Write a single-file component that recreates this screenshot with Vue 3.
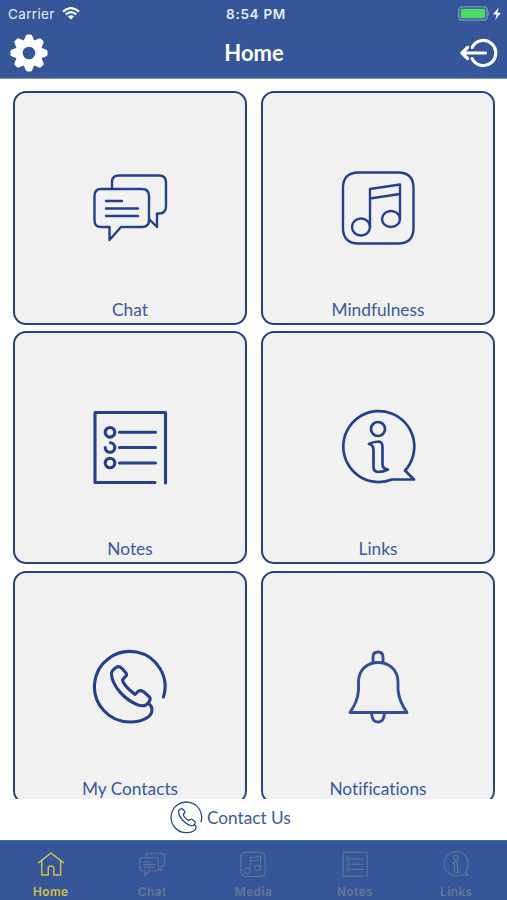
<template>
	<div class="screen">
		<header class="header">
			<div class="status-bar">
				<div class="status-left">
					<span class="carrier">Carrier</span>
					<svg class="wifi" viewBox="0 0 18 13">
						<path d="M1 4.6Q9-2.4 17 4.6M3.8 7.4Q9 3 14.2 7.4" />
						<path class="solid" d="M6 9.5Q9 7.2 12 9.5L9 12.5Z" />
					</svg>
				</div>
				<span class="time">8:54 PM</span>
				<div class="status-right">
					<svg class="battery" viewBox="0 0 44 16">
						<rect class="battery-case" x="0.7" y="0.9" width="28.4" height="13.2" rx="3.4" />
						<rect class="battery-level" x="2.6" y="2.8" width="24.6" height="9.4" rx="1.2" />
						<path class="battery-tip" d="M30.2 5.2Q32.4 7.5 30.2 10Z" />
						<path class="bolt" d="M40.8 1.2L35 8.5H38.6L37.2 14.2L42.8 6.8H39.2Z" />
					</svg>
				</div>
			</div>
			<div class="nav-bar">
				<svg class="gear" viewBox="-20 -20 40 40">
					<circle r="13.3" />
					<path v-for="n in 8" :key="n" class="tooth" d="M-5.6-11.5L-3.4-16.8Q-2.9-18.5-1.7-18.5H1.7Q2.9-18.5 3.4-16.8L5.6-11.5Z" :transform="`rotate(${n * 45})`" />
					<circle class="hole" r="6.3" />
				</svg>
				<h1>Home</h1>
				<svg class="logout" viewBox="0 0 40 30">
					<path d="M13.1 9.4A12.5 12.5 0 1 1 13.1 20.6M26.5 15H3M8.5 9.5L3 15L8.5 20.5" />
				</svg>
			</div>
		</header>

		<main class="grid">
			<div v-for="card in cards" :key="card.label" class="card">
				<svg class="card-icon" :class="card.icon" viewBox="12 9 76 76">
					<path v-for="d in icons[card.icon]" :key="d" :d="d" />
				</svg>
				<span class="card-label">{{ card.label }}</span>
			</div>
		</main>

		<div class="contact">
			<svg class="contact-icon" viewBox="12 9 76 76">
				<path v-for="d in icons.phone" :key="d" :d="d" />
			</svg>
			<span>Contact Us</span>
		</div>

		<nav class="tab-bar">
			<div
				v-for="tab in tabs"
				:key="tab.label"
				class="tab"
				:class="{ active: tab.label === activeTab }"
				@click="activeTab = tab.label"
			>
				<svg class="tab-icon" viewBox="12 9 76 76">
					<path v-for="d in icons[tab.icon]" :key="d" :d="d" />
				</svg>
				<span>{{ tab.label }}</span>
			</div>
		</nav>
	</div>
</template>

<script setup>
import { ref } from 'vue'

const activeTab = ref('Home')

const cards = [
	{ label: 'Chat', icon: 'chat' },
	{ label: 'Mindfulness', icon: 'music' },
	{ label: 'Notes', icon: 'notes' },
	{ label: 'Links', icon: 'info' },
	{ label: 'My Contacts', icon: 'phone' },
	{ label: 'Notifications', icon: 'bell' },
]

const tabs = [
	{ label: 'Home', icon: 'home' },
	{ label: 'Chat', icon: 'chat' },
	{ label: 'Media', icon: 'music' },
	{ label: 'Notes', icon: 'notes' },
	{ label: 'Links', icon: 'info' },
]

const icons = {
	home: ['M14 43L50 15L86 43', 'M23 37V79H42V59Q42 53 50 53T58 59V79H78V37'],
	chat: [
		'M21 29H62Q69 29 69 36V60Q69 67 62 67H41L29.5 80V67H21Q14.5 67 14.5 60V36Q14.5 29 21 29Z',
		'M32 28V22Q32 15.5 39 15.5H79Q86 15.5 86 22.5V46Q86 53.5 79 53.5H77V67L69 59',
		'M26 41H42M26 48.5H58M26 56H58',
	],
	music: [
		'M30.5 12.5H70Q85.5 12.5 85.5 28V68Q85.5 83.5 70 83.5H30.5Q15 83.5 15 68V28Q15 12.5 30.5 12.5Z',
		'M42 67V29L72 24.5V59M42 38.5L72 34',
		'M24 67A9 8.5 0 1 0 42 67A9 8.5 0 1 0 24 67Z',
		'M54 59A9 8 0 1 0 72 59A9 8 0 1 0 54 59Z',
	],
	notes: [
		'M75 82.5H15V12.5H85.5V83',
		'M25.2 32.3A4.8 4.8 0 1 0 34.8 32.3A4.8 4.8 0 1 0 25.2 32.3Z',
		'M30.5 42.7A4.8 4.8 0 1 1 25.2 47.5',
		'M25.2 63A4.8 4.8 0 1 0 34.8 63A4.8 4.8 0 1 0 25.2 63Z',
		'M39.5 32.3H75.5M39.5 47.5H75.5M39.5 63H75.5',
	],
	info: [
		'M86 79.5H64A35.5 35.5 0 1 1 77 70.5Z',
		'M43 29A7 7 0 1 0 57 29A7 7 0 1 0 43 29Z',
		'M41 44Q46 41.5 51 41.5Q54.5 42 54.5 47V64Q54.5 69 60 69.5Q55 72 50 72Q45.5 71.5 45.5 67V50Q45.5 45 41 44Z',
	],
	phone: [
		'M83.5 57A35.3 35.3 0 1 0 50 82C62 82 72 77 72 70Q72 66 69 64',
		'M31.5 34Q31 31 36 27.5Q39 25.5 42 28.5L46 33Q47.5 35 45 37L42.5 40Q43 45 55 54.5L58 51.5Q61 49.5 64 52L69.5 57Q71 59 69 62L66 65Q63 66.5 58 65C45 60 32 46 31.5 34Z',
	],
	bell: [
		'M22 72.5Q30 61 30.5 50V42C30.5 29 40 22.5 50 22.5S70 29 70 42V50Q71 61 79 72.5Z',
		'M45 22.5V17Q45 12 50 12T55 17V22.5',
		'M43.5 73Q44 82 50 82T56.5 73',
	],
}
</script>

<style>
body {
	background-color: #fff;
}
</style>

<style scoped>
.screen {
	display: flex;
	flex-direction: column;
	width: 507px;
	height: 900px;
	overflow: hidden;
	background-color: #fff;
	color: #3a599b;
	font-family: Lato, sans-serif;
	font-variant-ligatures: none;
}
svg {
	display: block;
	fill: none;
	stroke: currentColor;
	stroke-linecap: round;
	stroke-linejoin: round;
}
.header {
	flex: none;
	height: 79px;
	box-sizing: border-box;
	border-bottom: 1px solid #7f97c5;
	background-color: #355799;
	color: #fff;
}
.status-bar,
.nav-bar {
	display: grid;
	grid-template-columns: 1fr auto 1fr;
	align-items: center;
}
.status-bar {
	height: 27px;
	padding: 0 5px 0 8px;
	font-family: Inter, sans-serif;
	font-size: 13.5px;
	color: #e9eef8;
}
.status-left {
	display: flex;
	align-items: center;
	gap: 7px;
}
.carrier {
	letter-spacing: 0.35px;
}
.wifi {
	width: 18px;
	height: 13px;
	stroke: #fff;
	stroke-width: 2.2;
	stroke-linecap: butt;
}
.wifi .solid {
	fill: #fff;
	stroke: none;
}
.time {
	padding-left: 2px;
	font-weight: 600;
	font-size: 13.5px;
	letter-spacing: 0.7px;
}
.status-right {
	display: flex;
	justify-content: flex-end;
}
.battery {
	width: 44px;
	height: 16px;
}
.battery-case {
	stroke: #8299c4;
	stroke-width: 1.3;
}
.battery-level {
	fill: #4cd964;
	stroke: none;
}
.battery-tip {
	fill: #8299c4;
	stroke: none;
}
.bolt {
	fill: #fff;
	stroke: none;
}
.nav-bar {
	height: 52px;
	padding: 0 8px 0 9px;
}
.gear {
	width: 40px;
	height: 40px;
	fill: #fff;
	stroke: none;
}
.gear .hole {
	fill: #355799;
}
h1 {
	margin: 0;
	font-size: 22px;
	line-height: 28px;
	font-weight: 700;
}
.logout {
	width: 40px;
	height: 30px;
	justify-self: end;
	stroke-width: 3.2;
}
.grid {
	flex: none;
	display: grid;
	grid-template-columns: 234px 234px;
	grid-auto-rows: 233.5px;
	gap: 6.1px 14px;
	height: 720px;
	box-sizing: border-box;
	padding: 12.4px 0 0 13px;
	overflow: hidden;
}
.card {
	display: flex;
	flex-direction: column;
	align-items: center;
	justify-content: space-between;
	box-sizing: border-box;
	padding: 76px 0 2.2px;
	border: 2px solid #293f87;
	border-radius: 13px;
	background-color: #f1f1f1;
}
.card-icon {
	width: 76px;
	height: 76px;
	color: #24418c;
	stroke-width: 2.4;
}
.card-icon.notes,
.card-icon.phone {
	stroke-width: 3.1;
}
.card-icon.info {
	stroke-width: 2.7;
}
.card-icon.bell {
	stroke-width: 2.9;
	color: #344f96;
}
.card-label {
	font-size: 17.3px;
	line-height: 22px;
}
.contact {
	flex: none;
	display: flex;
	align-items: center;
	height: 41px;
	padding: 0 0 5px 170px;
	box-sizing: border-box;
	gap: 4px;
	font-size: 17.2px;
}
.contact-icon {
	width: 33px;
	height: 33px;
	color: #2c4890;
	stroke-width: 3;
}
.tab-bar {
	flex: none;
	display: grid;
	grid-template-columns: repeat(5, 1fr);
	height: 60px;
	box-sizing: border-box;
	border-top: 1px solid #4a68a2;
	background-color: #355799;
	font-family: Inter, sans-serif;
}
.tab {
	display: flex;
	flex-direction: column;
	align-items: center;
	padding-top: 10px;
	color: #647798;
	font-size: 11.8px;
	line-height: 15px;
	font-weight: 600;
	letter-spacing: 0.45px;
	cursor: pointer;
}
.tab-icon {
	width: 26px;
	height: 26px;
	margin-bottom: 8px;
	stroke-width: 3;
}
.tab.active {
	color: #d5c03f;
}
.active .tab-icon {
	stroke-width: 4.2;
}
</style>
